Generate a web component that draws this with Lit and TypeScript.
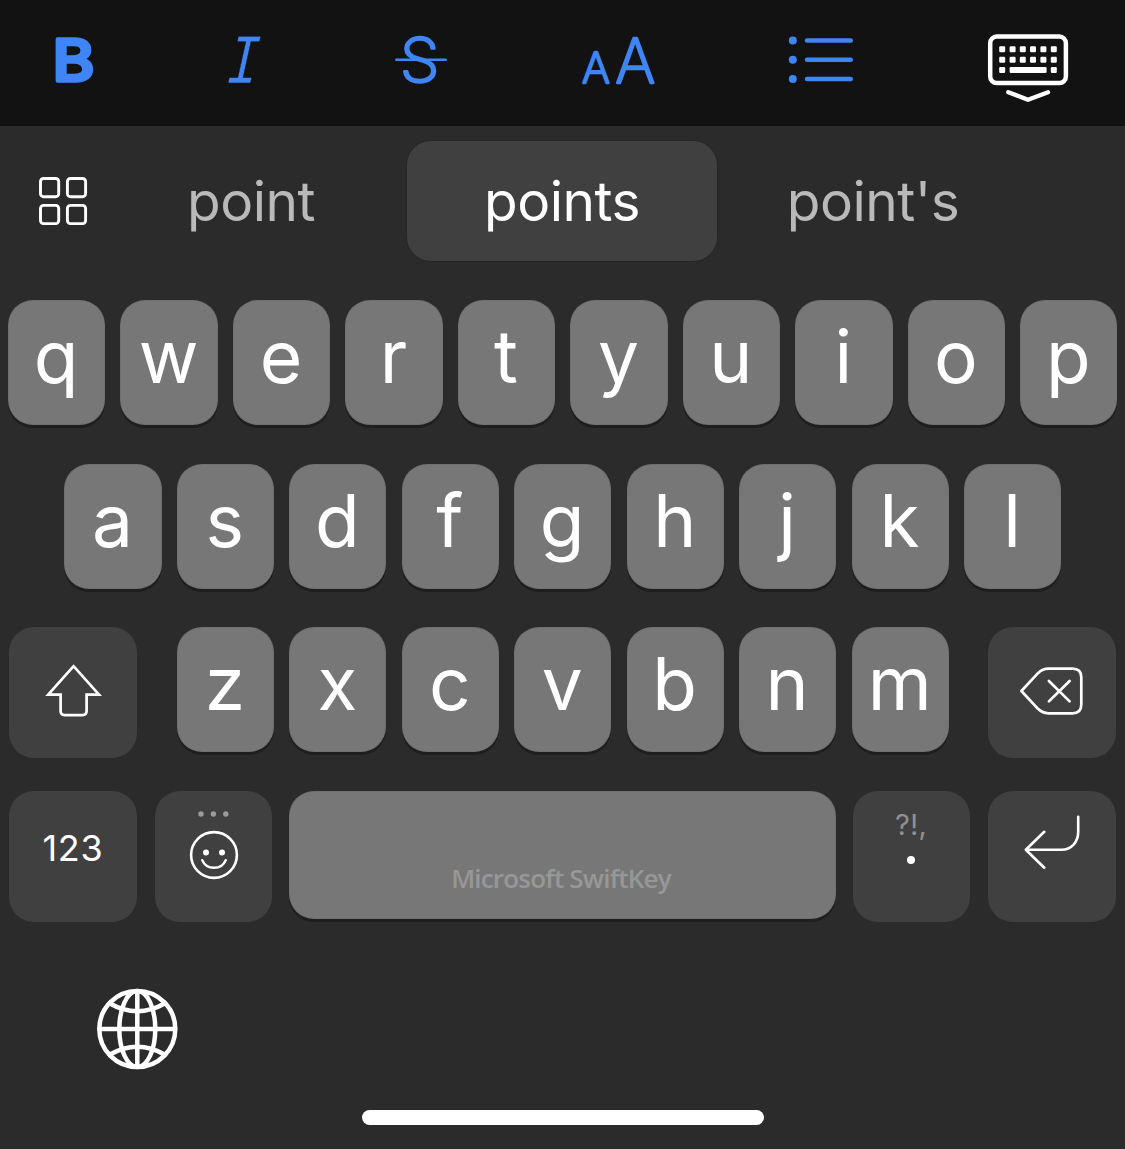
import { LitElement, html, svg, css, TemplateResult } from "lit";
import { customElement, property } from "lit/decorators.js";

/** A single letter key. */
@customElement("letter-key")
class LetterKey extends LitElement {
  @property() label = "";

  static styles = css`
    :host {
      display: flex;
      justify-content: center;
      box-sizing: border-box;
      width: 97.25px;
      height: 125px;
      padding-right: 1px;
      border-radius: 25px;
      background: #777777;
      box-shadow: 0 3px 0 #1e1e1e, inset 0 0 0 1px rgba(0, 0, 0, 0.06);
    }
    .glyph {
      font: 400 73px/113px Inter, "Liberation Sans", sans-serif;
      color: #ffffff;
    }
  `;

  render() {
    return html`<span class="glyph">${this.label}</span>`;
  }
}

const boldIcon = svg`
  <svg class="blue" width="60" height="60" viewBox="45 30 60 60">
    <text class="bold" transform="translate(52.6 81.2) scale(1.1 1)">B</text>
  </svg>`;

const italicIcon = svg`
  <svg class="blue" width="60" height="60" viewBox="214.5 30 60 60">
    <text class="italic" transform="translate(225 83.2) skewX(-4) scale(0.78 1)">I</text>
  </svg>`;

const strikeIcon = svg`
  <svg class="blue" width="60" height="60" viewBox="391 30 60 60">
    <text class="thin" transform="translate(399.8 82.2) scale(1.05 1)" font-size="61">S</text>
    <path class="line" stroke-width="2.4" d="M396.3 59.8H445.8"/>
  </svg>`;

const sizeIcon = svg`
  <svg class="blue" width="80" height="60" viewBox="578 30 80 60">
    <text class="thin" x="581.9" y="82.6" font-size="42.5">A</text>
    <text class="thin" x="615.3" y="82.6" font-size="61">A</text>
  </svg>`;

const listIcon = svg`
  <svg class="blue" width="70" height="60" viewBox="786 30 70 60">
    ${[40.5, 59.8, 79].map(
      (y) => svg`
        <circle cx="792.8" cy=${y} r="4"/>
        <path class="line" stroke-width="4.4" d="M807 ${y}H850.8"/>`
    )}
  </svg>`;

const hideKeyboardIcon = svg`
  <svg width="84" height="76" viewBox="986 30 84 76" fill="#fff">
    <rect class="line" x="990.2" y="36.6" width="75.7" height="46.5" rx="6.5" stroke-width="4.5"/>
    ${[46.3, 56.8].map((y) =>
      [999.2, 1009.6, 1019.8, 1030, 1040.4, 1050.8].map(
        (x) => svg`<rect x=${x} y=${y} width="6" height="6" rx="1.2"/>`
      )
    )}
    <rect x="999.2" y="67" width="6" height="6" rx="1.2"/>
    <rect x="1009.6" y="67" width="37" height="6" rx="1.2"/>
    <rect x="1050.8" y="67" width="6" height="6" rx="1.2"/>
    <path class="line" stroke-width="4.4" d="M1008.3 92.3L1028 99.7L1048 92.3"/>
  </svg>`;

const gridIcon = svg`
  <svg width="50" height="50" viewBox="38 176 50 50">
    <g class="line" stroke-width="2.9">
      <rect x="40.5" y="178.5" width="18.2" height="18.2" rx="3"/>
      <rect x="67.4" y="178.5" width="18.2" height="18.2" rx="3"/>
      <rect x="40.5" y="205.4" width="18.2" height="18.2" rx="3"/>
      <rect x="67.4" y="205.4" width="18.2" height="18.2" rx="3"/>
    </g>
  </svg>`;

const shiftIcon = svg`
  <svg width="128" height="131" viewBox="9 627 128 131">
    <path class="sharp" stroke-width="2.7"
      d="M73.6 666.2L48.2 694.6H60.6V711Q60.6 715.1 64.7 715.1H82.5Q86.6 715.1 86.6 711V694.6H99Z"/>
  </svg>`;

const backspaceIcon = svg`
  <svg width="128" height="131" viewBox="988 627 128 131">
    <g class="line" stroke-width="2.7">
      <path d="M1021.4 691L1038 673.2Q1042.5 668.7 1048.5 668.7H1072.5Q1081.3 668.7 1081.3 677.5V704.5Q1081.3 713.3 1072.5 713.3H1048.5Q1042.5 713.3 1038 708.8Z"/>
      <path d="M1048.9 681L1069.6 701.4M1069.6 681L1048.9 701.4"/>
    </g>
  </svg>`;

const emojiIcon = svg`
  <svg width="117" height="131" viewBox="155 791 117 131" fill="#fff">
    <g fill="#9b9b9b">
      <circle cx="201" cy="814" r="2.7"/>
      <circle cx="213.4" cy="814" r="2.7"/>
      <circle cx="225.8" cy="814" r="2.7"/>
    </g>
    <circle class="line" cx="214" cy="855" r="22.9" stroke-width="2.6"/>
    <circle cx="206" cy="852.4" r="3"/>
    <circle cx="222" cy="852.4" r="3"/>
    <path class="line" stroke-width="2.4" d="M202.3 860.2C206.5 870.3 221.5 870.3 225.7 860.2"/>
  </svg>`;

const returnIcon = svg`
  <svg width="128" height="131" viewBox="988 791 128 131">
    <path class="line" stroke-width="2.6"
      d="M1078.2 816.8V832C1078.2 842 1071.5 849.7 1061.5 849.7H1026M1044.3 831.8L1025.8 849.7L1044.3 867.7"/>
  </svg>`;

const globeIcon = svg`
  <svg width="84" height="84" viewBox="95 986.7 84 84">
    <g class="line" stroke-width="4.5">
      <circle cx="137.3" cy="1028.7" r="38"/>
      <ellipse cx="137.3" cy="1028.7" rx="18" ry="38"/>
      <path d="M137.3 991V1066M99.5 1028.7H175"/>
      <path d="M109.5 1003Q137.3 1019 165.1 1003M109.5 1054.4Q137.3 1038.4 165.1 1054.4"/>
    </g>
  </svg>`;

@customElement("app-root")
class AppRoot extends LitElement {
  static styles = css`
    :host {
      display: flex;
      flex-direction: column;
      box-sizing: border-box;
      width: 1125px;
      height: 1149px;
      overflow: hidden;
      background: #2b2b2b;
      color: #ffffff;
      font-family: Inter, "Liberation Sans", sans-serif;
    }
    svg {
      display: block;
      overflow: visible;
    }
    .line {
      fill: none;
      stroke: #ffffff;
      stroke-linecap: round;
      stroke-linejoin: round;
    }
    .sharp {
      fill: none;
      stroke: #ffffff;
      stroke-linejoin: miter;
    }
    .blue {
      fill: #3f85f5;
    }
    .blue .line {
      stroke: #3f85f5;
    }
    .blue text {
      stroke: #3f85f5;
      stroke-linejoin: round;
    }
    .bold {
      font: 500 58px Inter, sans-serif;
      stroke-width: 3.6px;
    }
    .blue .italic {
      font: italic 400 71px "Liberation Mono", monospace;
      stroke: #121212;
      stroke-width: 0.5px;
    }
    .thin {
      font-family: Inter, sans-serif;
      font-weight: 200;
      stroke-width: 2.3px;
    }

    .toolbar {
      display: grid;
      grid-template-columns: 150px 189px 164px 230px 176px 238px;
      flex: none;
      height: 126px;
      box-sizing: border-box;
      padding-top: 30px;
      background: #121212;
    }
    .tool {
      display: flex;
      justify-content: center;
      align-items: flex-start;
    }

    .suggestions {
      display: grid;
      grid-template-columns: 57px 312px 310px 312px;
      flex: none;
      height: 120px;
      margin-top: 15px;
      padding-left: 38px;
      align-items: center;
    }
    .word {
      font-size: 55px;
      line-height: 120px;
      letter-spacing: -0.5px;
      text-align: center;
      color: #b9b9b9;
      border-radius: 24px;
    }
    .word.active {
      color: #ffffff;
      background: #404040;
      box-shadow: 0 0 0 1px #272727;
    }

    .keys {
      display: flex;
      flex-direction: column;
      flex: none;
      margin-top: 39px;
    }
    .row {
      display: flex;
      justify-content: center;
      align-items: flex-start;
      gap: 15.22px;
      height: 125px;
      padding-left: 0.5px;
      margin-bottom: 39px;
    }
    .row.bottom {
      justify-content: space-between;
      height: 131px;
      margin: 0;
      padding: 0 9px;
      gap: 0;
    }
    .row.third {
      justify-content: space-between;
      height: 131px;
      margin-bottom: 33px;
      padding: 0 9px;
      margin-top: -1px;
    }
    .letters {
      display: flex;
      gap: 15.22px;
      margin-left: 0.5px;
    }
    .side {
      display: flex;
      flex-direction: column;
      align-items: center;
      width: 128px;
      height: 131px;
      border-radius: 25px;
      background: #404040;
    }
    .narrow {
      width: 117px;
    }
    .numbers {
      font-size: 36px;
      line-height: 114px;
      letter-spacing: 0.7px;
    }
    .marks {
      font-size: 29px;
      line-height: 67px;
      font-weight: 400;
      letter-spacing: 0.2px;
      margin-right: 1px;
      color: #8f8f8f;
    }
    .period {
      width: 8px;
      height: 8px;
      margin: -2px 1px 0 0;
      border-radius: 50%;
      background: #ffffff;
    }
    .space {
      display: flex;
      align-items: flex-end;
      justify-content: center;
      width: 547px;
      height: 128px;
      margin: 0 -1px;
      border-radius: 25px;
      background: #777777;
      box-shadow: 0 3px 0 #1e1e1e, inset 0 0 0 1px rgba(0, 0, 0, 0.06);
    }
    .brand {
      font: 600 26px/81px "Open Sans", "Noto Sans", sans-serif;
      letter-spacing: -0.8px;
      margin-right: 3px;
      color: #979797;
    }

    .footer {
      display: flex;
      flex-direction: column;
      flex: 1;
      padding-top: 65px;
    }
    .globe {
      margin-left: 95px;
    }
    .home {
      align-self: center;
      width: 402px;
      height: 15px;
      margin-top: 39px;
      border-radius: 8px;
      background: #ffffff;
    }
  `;

  private letters(chars: string): TemplateResult[] {
    return [...chars].map((c) => html`<letter-key label=${c}></letter-key>`);
  }

  render() {
    const tools = [boldIcon, italicIcon, strikeIcon, sizeIcon, listIcon, hideKeyboardIcon];
    return html`
      <div class="toolbar">
        ${tools.map((icon) => html`<div class="tool">${icon}</div>`)}
      </div>
      <div class="suggestions">
        ${gridIcon}
        <div class="word">point</div>
        <div class="word active">points</div>
        <div class="word">point's</div>
      </div>
      <div class="keys">
        <div class="row">${this.letters("qwertyuiop")}</div>
        <div class="row">${this.letters("asdfghjkl")}</div>
        <div class="row third">
          <div class="side">${shiftIcon}</div>
          <div class="letters">${this.letters("zxcvbnm")}</div>
          <div class="side">${backspaceIcon}</div>
        </div>
        <div class="row bottom">
          <div class="side"><span class="numbers">123</span></div>
          <div class="side narrow">${emojiIcon}</div>
          <div class="space"><span class="brand">Microsoft SwiftKey</span></div>
          <div class="side narrow">
            <span class="marks">?!,</span>
            <span class="period"></span>
          </div>
          <div class="side">${returnIcon}</div>
        </div>
      </div>
      <div class="footer">
        <div class="globe">${globeIcon}</div>
        <div class="home"></div>
      </div>
    `;
  }
}
